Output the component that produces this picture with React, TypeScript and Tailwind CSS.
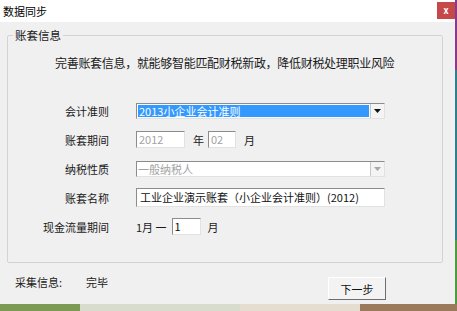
import React from "react";

const font = { fontFamily: '"Noto Sans CJK SC", "Noto Sans", sans-serif' };

const sunken =
  "border border-t-[#8c8c8c] border-l-[#8c8c8c] border-b-[#e2e2e2] border-r-[#e2e2e2] bg-white";

function Row({ label, children }: { label: string; children: React.ReactNode }) {
  return (
    <div className="flex items-center h-[29px]">
      <div className="w-[101px] text-right text-[11px] leading-[16px] text-[#1a1a1a]">{label}</div>
      <div className="ml-[27px] flex items-center">{children}</div>
    </div>
  );
}

function Arrow({ disabled }: { disabled?: boolean }) {
  return (
    <div className="w-[14px] h-full flex items-center justify-center bg-[#f4f4f4] border-l border-[#c8c8c8]">
      <svg width="7" height="4" viewBox="0 0 7 4">
        <path d="M0 0h7L3.5 4z" fill={disabled ? "#a8a8a8" : "#111"} />
      </svg>
    </div>
  );
}

export default function App() {
  return (
    <div className="w-[457px] h-[311px] flex flex-col overflow-hidden bg-[#6d8a4a]" style={font}>
      <div className="flex h-[304px]">
        {/* Window */}
        <div className="w-[455px] flex flex-col bg-[#f0f0f0]">
          {/* Title bar */}
          <div className="h-[22px] bg-white flex items-start justify-between">
            <span className="ml-[3px] mt-[3px] text-[11px] leading-[16px] text-black">数据同步</span>
            <div className="mt-[2px] w-[18px] h-[17px] bg-[#c74848] flex items-center justify-center text-white text-[9px] font-bold leading-none">
              x
            </div>
          </div>

          {/* Body */}
          <fieldset className="ml-[7px] mt-[5px] w-[436px] border border-[#d3d3d3] rounded-[2px] pb-[21px]">
            <legend className="ml-[5px] px-[2px] text-[11.5px] leading-[16px] text-[#1a1a1a]">账套信息</legend>
            <div className="pt-[12px] pl-[47px] text-[12px] leading-[16px] text-[#1a1a1a] tracking-[-0.3px]">
              完善账套信息，就能够智能匹配财税新政，降低财税处理职业风险
            </div>
            <div className="mt-[25px] flex flex-col">
              <Row label="会计准则">
                <div className={`${sunken} w-[249px] h-[16px] flex items-stretch`}>
                  <div className="flex-1 m-[1px] bg-[#3399ff] text-white text-[11px] leading-[12px] px-[1px] flex items-center">
                    2013小企业会计准则
                  </div>
                  <Arrow />
                </div>
              </Row>
              <Row label="账套期间">
                <div className={`${sunken} w-[49px] h-[17px] text-[11px] leading-[15px] text-[#a3a3a3] pl-[2px]`}>2012</div>
                <span className="ml-[8px] text-[11px] leading-[16px] text-[#1a1a1a]">年</span>
                <div className={`${sunken} ml-[4px] w-[28px] h-[17px] text-[11px] leading-[15px] text-[#a3a3a3] pl-[2px]`}>02</div>
                <span className="ml-[8px] text-[11px] leading-[16px] text-[#1a1a1a]">月</span>
              </Row>
              <Row label="纳税性质">
                <div className={`${sunken} w-[249px] h-[16px] flex items-stretch`}>
                  <div className="flex-1 text-[11px] leading-[14px] text-[#a3a3a3] px-[1px] flex items-center">一般纳税人</div>
                  <Arrow disabled />
                </div>
              </Row>
              <Row label="账套名称">
                <div className={`${sunken} w-[249px] h-[19px] text-[11px] leading-[17px] text-[#111] pl-[3px]`}>
                  工业企业演示账套（小企业会计准则）(2012)
                </div>
              </Row>
              <Row label="现金流量期间">
                <span className="text-[11px] leading-[16px] text-[#1a1a1a]">1月 一</span>
                <div className={`${sunken} ml-[5px] w-[29px] h-[17px] text-[11px] leading-[15px] text-[#111] pl-[2px]`}>1</div>
                <span className="ml-[7px] text-[11px] leading-[16px] text-[#1a1a1a]">月</span>
              </Row>
            </div>
          </fieldset>

          <div className="mt-[14px] flex items-start h-[23px]">
            <span className="ml-[15px] -mt-[3px] w-[71px] text-[11px] leading-[16px] text-[#1a1a1a]">采集信息:</span>
            <span className="-mt-[3px] text-[11px] leading-[16px] text-[#1a1a1a]">完毕</span>
            <button className="ml-[220px] w-[58px] h-[23px] bg-[#f3f3f3] border border-t-white border-l-white border-b-[#6e6e6e] border-r-[#6e6e6e] text-[11px] leading-[16px] text-[#111]">
              下一步
            </button>
          </div>
        </div>
        {/* Desktop edge */}
        <div className="w-[2px] flex flex-col">
          <div className="h-[70px] bg-[#8a3a8a]" />
          <div className="h-[170px] bg-[#2f7f8f]" />
          <div className="flex-1 bg-[#4f9a3f]" />
        </div>
      </div>
      {/* Desktop bottom */}
      <div className="flex-1 flex">
        <div className="w-[80px] bg-[#7d9a55]" />
        <div className="w-[160px] bg-[#d8dccc]" />
        <div className="w-[120px] bg-[#e4ddd0]" />
        <div className="flex-1 bg-[#9a7a5a]" />
      </div>
    </div>
  );
}
